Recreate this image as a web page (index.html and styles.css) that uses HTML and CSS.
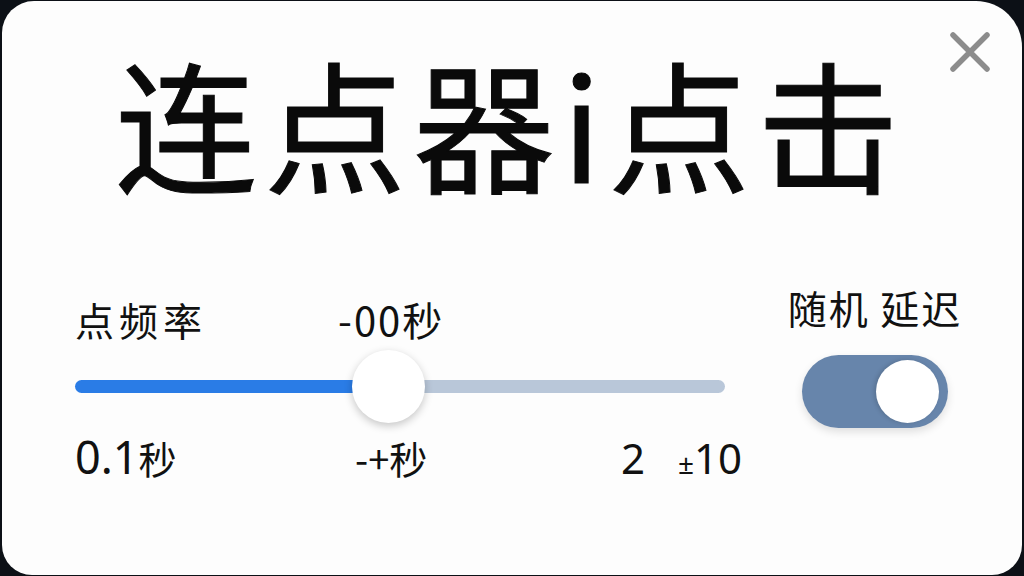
FILE: index.html
```html
<!DOCTYPE html>
<html>
<head>
    <title>连点器i点击</title>
    <link rel="stylesheet" href="styles.css">
</head>
<body>
    <div class="card">
        <button class="close" aria-label="关闭">
            <svg width="40" height="40" viewBox="0 0 40 40">
                <path d="M3 3 L37 37 M37 3 L3 37" stroke="#8c8c8c" stroke-width="5.5" stroke-linecap="round"/>
            </svg>
        </button>

        <h1 class="title">连点器i点击</h1>

        <div class="controls">
            <div class="rate">
                <div class="rate-head">
                    <span class="label">点频率</span>
                    <span class="value">-00秒</span>
                </div>
                <div class="slider">
                    <div class="track"></div>
                    <div class="thumb"></div>
                </div>
                <div class="rate-foot">
                    <span class="min"><b>0.1</b>秒</span>
                    <span class="mid">-+秒</span>
                    <span class="max">2 &nbsp;&nbsp;<small>±</small>10</span>
                </div>
            </div>

            <div class="random">
                <span class="label">随机 延迟</span>
                <div class="switch on"><span class="knob"></span></div>
            </div>
        </div>
    </div>
</body>
</html>
```

FILE: styles.css
```css
* { box-sizing: border-box; }
html, body { height: 100%; }
body { margin: 0; padding: 1px 2px; background: #0c1016; font-family: "Noto Sans CJK SC", "Noto Sans", sans-serif; color: #111; }

.card { position: relative; height: 100%; background: #fdfdfd; border-radius: 32px 46px 30px 30px; padding: 40px 0 0 73px; }

.close { position: absolute; top: 31px; right: 32px; background: none; border: 0; padding: 0; cursor: pointer; }

.title { margin: 0 0 0 40px; font-size: 142px; font-weight: 400; line-height: 160px; letter-spacing: 7px; color: #0a0a0a; -webkit-text-stroke: 1px #0a0a0a; }

.controls { display: flex; margin-top: 96px; }

.rate { width: 667px; }
.rate-head { display: flex; font-size: 39px; line-height: 44px; }
.rate-head .label { width: 263px; letter-spacing: 5px; }
.rate-head .value { font-size: 40px; letter-spacing: 2px; }

.slider { position: relative; width: 650px; height: 13px; margin: 39px 0 0; }
.track { height: 13px; border-radius: 7px; background: linear-gradient(to right, #2a7ce6 0, #2a7ce6 316px, #b9c7d9 316px); }
.thumb { position: absolute; left: 277px; top: -30px; width: 73px; height: 73px; border-radius: 50%; background: #fff; box-shadow: 0 3px 8px rgba(0, 0, 0, 0.22); }

.rate-foot { display: flex; align-items: baseline; margin-top: 40px; font-size: 38px; line-height: 48px; }
.rate-foot b { font-weight: 400; font-family: "Noto Sans", sans-serif; font-size: 45px; }
.rate-foot .min { width: 280px; }
.rate-foot .max { margin-left: auto; font-family: "Noto Sans", sans-serif; font-size: 42px; }
.rate-foot small { font-size: 28px; }

.random { display: flex; flex-direction: column; align-items: center; margin: -12px 0 0 38px; width: 190px; }
.random .label { font-size: 39px; line-height: 44px; letter-spacing: 2px; }
.switch { width: 146px; height: 73px; margin-top: 26px; border-radius: 37px; background: #6785ab; padding: 5px 9px 5px 5px; display: flex; justify-content: flex-end; box-shadow: 0 4px 8px rgba(0, 0, 0, 0.12); }
.knob { width: 63px; height: 63px; border-radius: 50%; background: #fff; box-shadow: -2px 0 4px rgba(0, 0, 0, 0.15); }
```
